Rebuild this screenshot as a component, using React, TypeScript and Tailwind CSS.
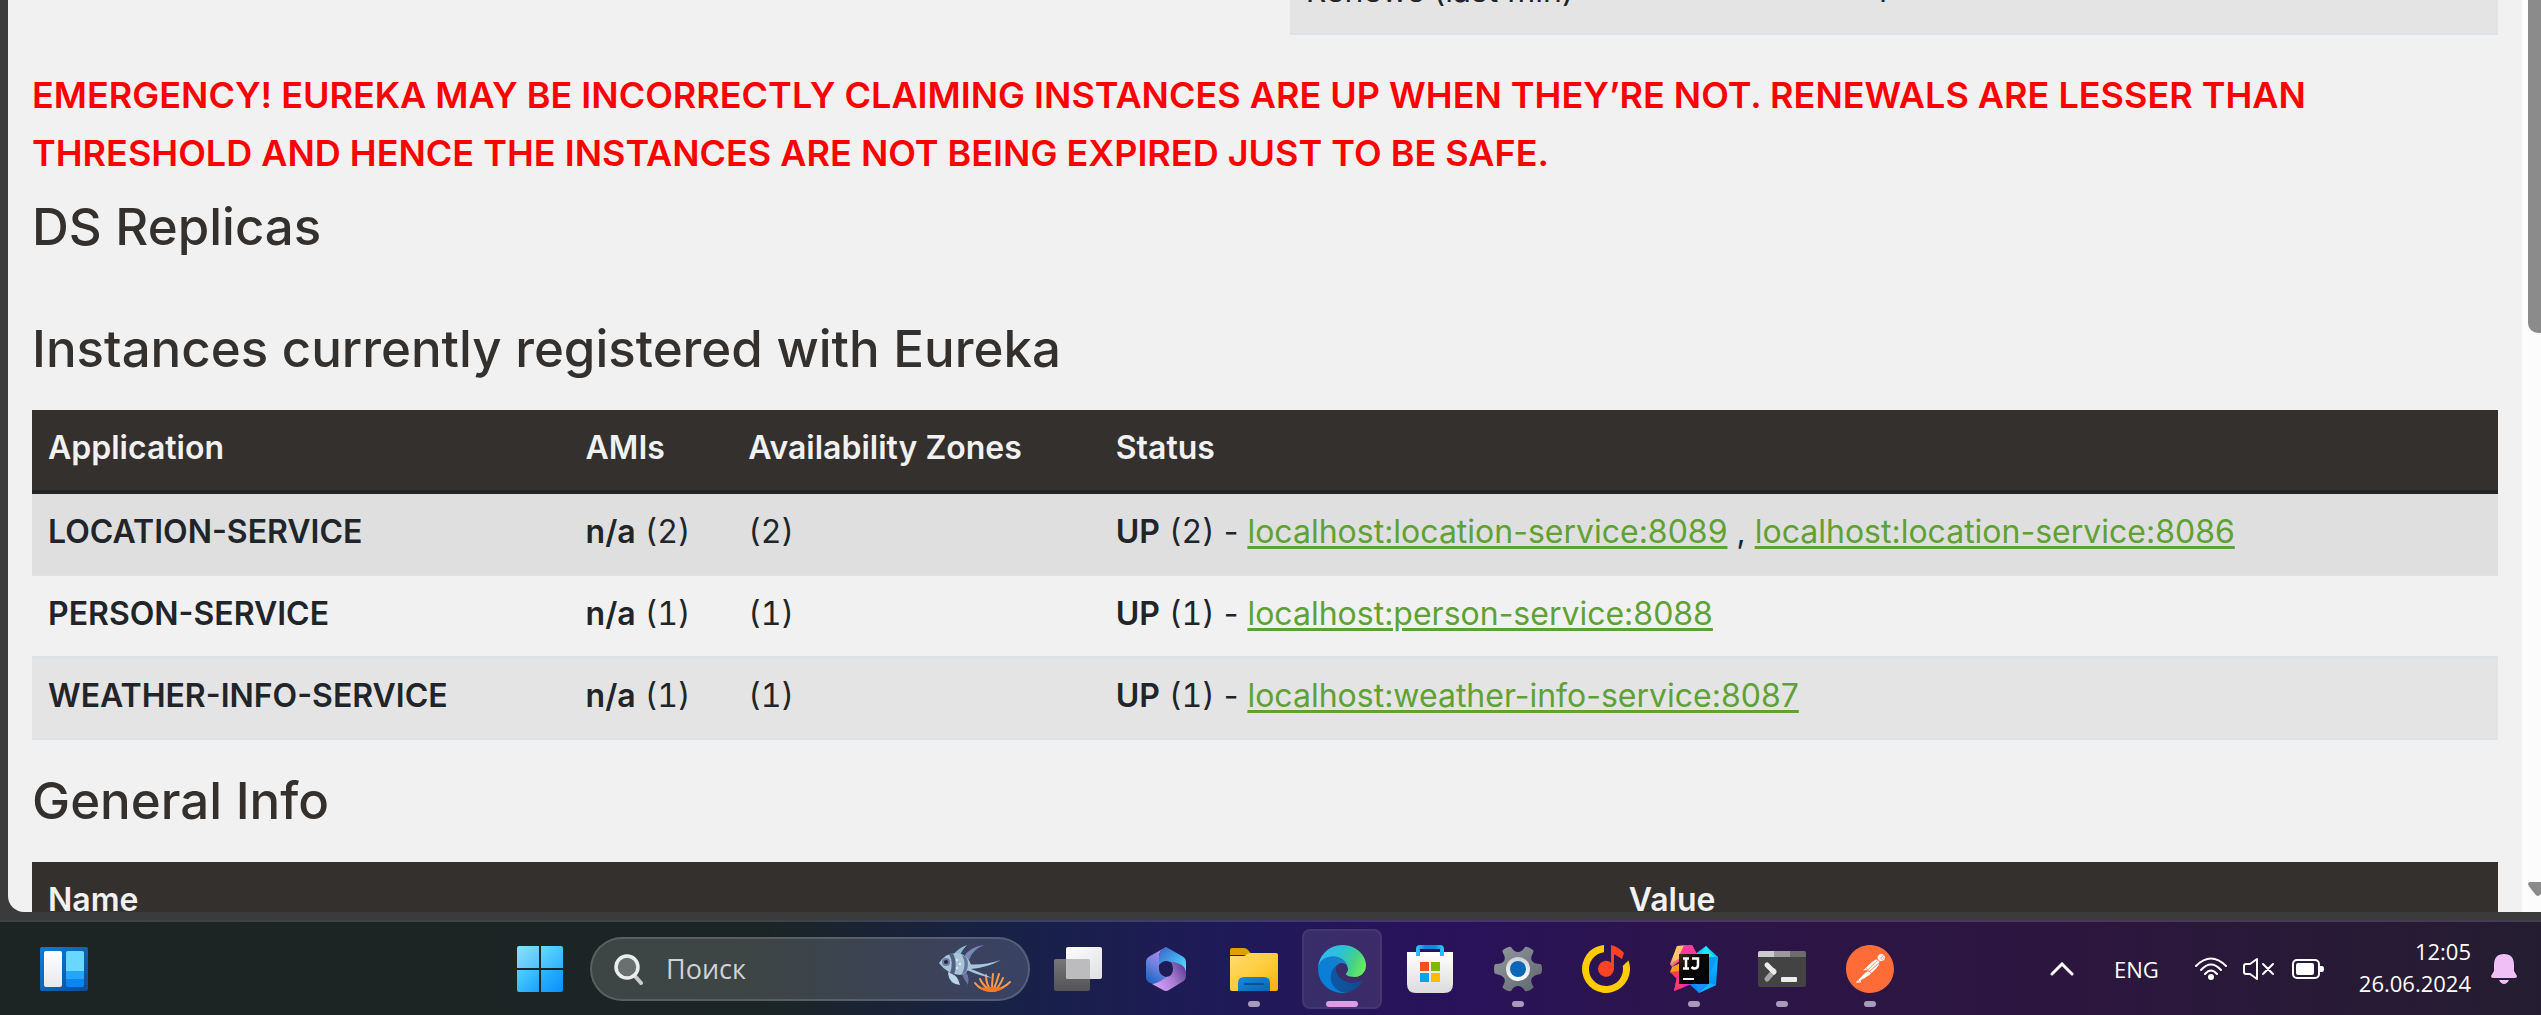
import React from "react";
import type { ReactNode } from "react";
import { SiPostman } from "react-icons/si";

type Instance = {
  name: string;
  count: number;
  links: string[];
  shade: string;
};

const instances: Instance[] = [
  {
    name: "LOCATION-SERVICE",
    count: 2,
    links: ["localhost:location-service:8089", "localhost:location-service:8086"],
    shade: "bg-[#dfdfdf]",
  },
  { name: "PERSON-SERVICE", count: 1, links: ["localhost:person-service:8088"], shade: "bg-[#f1f1f1]" },
  { name: "WEATHER-INFO-SERVICE", count: 1, links: ["localhost:weather-info-service:8087"], shade: "bg-[#e4e4e4]" },
];

const TABLE = "w-full table-fixed border-separate border-spacing-0 text-left text-[32px] leading-[48px]";
const HEAD = "border-b-4 border-[#212529] bg-[#34302d] px-4 pt-3.5 pb-4.5 font-semibold text-[#f1f1f1]";
const CELL = "border-b-2 border-[#dee2e6] px-4 pt-3.5 pb-4.5 whitespace-nowrap";

function Heading({ children }: { children: ReactNode }) {
  return <h1 className="text-[51px] leading-[58px] font-medium text-[#34302d]">{children}</h1>;
}

function Count({ value }: { value: number }) {
  return <span className="tabular-nums">({value})</span>;
}

function StatusTable() {
  return (
    <div className="-mt-[47px] flex justify-end">
      <div className="w-[49%]">
        <table className={TABLE}>
          <tbody>
            <tr className="bg-[#e4e4e4]">
              <td className={CELL + " w-[46.6%]"}>Renews (last min)</td>
              <td className={CELL}>4</td>
            </tr>
          </tbody>
        </table>
      </div>
    </div>
  );
}

function InstancesTable() {
  return (
    <table className={TABLE}>
      <thead>
        <tr>
          <th className={HEAD + " w-[21.8%]"}>Application</th>
          <th className={HEAD + " w-[6.6%]"}>AMIs</th>
          <th className={HEAD + " w-[14.9%]"}>Availability Zones</th>
          <th className={HEAD}>Status</th>
        </tr>
      </thead>
      <tbody>
        {instances.map((item) => (
          <tr key={item.name} className={item.shade}>
            <td className={CELL}>
              <b className="font-semibold">{item.name}</b>
            </td>
            <td className={CELL}>
              <b className="font-semibold">n/a</b> <Count value={item.count} />
            </td>
            <td className={CELL}>
              <Count value={item.count} />
            </td>
            <td className={CELL}>
              <b className="font-semibold">UP</b> <Count value={item.count} /> -{" "}
              {item.links.map((link, i) => (
                <React.Fragment key={link}>
                  {i > 0 && " , "}
                  <a href="#" className="text-[#5fa134] underline decoration-3 underline-offset-3">
                    {link}
                  </a>
                </React.Fragment>
              ))}
            </td>
          </tr>
        ))}
      </tbody>
    </table>
  );
}

function GeneralTable() {
  return (
    <table className={TABLE}>
      <thead>
        <tr>
          <th className={HEAD + " w-[64.1%]"}>Name</th>
          <th className={HEAD}>Value</th>
        </tr>
      </thead>
    </table>
  );
}

function Scrollbar() {
  return (
    <div className="flex w-[19px] shrink-0 flex-col items-end justify-between bg-[#fcfcfc] pb-4">
      <div className="h-[333px] w-[13px] rounded-bl-[10px] bg-[#8b8b8b]" />
      <svg className="h-[14px] w-[13px]" viewBox="0 0 13 14" aria-hidden="true">
        <path d="M2 0H13V12L10.500 14Q8 14 7 12L.8 4Q-1 0 2 0Z" fill="#8b8b8b" />
      </svg>
    </div>
  );
}

function WidgetsIcon() {
  return (
    <svg className="h-12 w-12" viewBox="0 0 48 48" aria-hidden="true">
      <defs>
        <linearGradient id="wg-frame" x1="0" y1="0" x2="1" y2="1">
          <stop offset="0" stopColor="#0a7fdc" />
          <stop offset="1" stopColor="#114a92" />
        </linearGradient>
        <linearGradient id="wg-pane" x1="0" y1="0" x2="0" y2="1">
          <stop offset="0" stopColor="#fff" />
          <stop offset="1" stopColor="#e9e9ec" />
        </linearGradient>
      </defs>
      <rect x="0" y="2" width="48" height="44" rx="2" fill="url(#wg-frame)" />
      <rect x="4" y="6" width="18" height="36" rx="2" fill="url(#wg-pane)" />
      <rect x="26" y="6" width="18" height="36" rx="2" fill="#0a86ee" />
      <path d="M26 26H44V34H26Z" fill="#22a5fb" />
      <path d="M28 6H42Q44 6 44 8V26H26V8Q26 6 28 6Z" fill="#69d8ff" />
    </svg>
  );
}

function StartIcon() {
  return (
    <svg className="h-[46px] w-[46px]" viewBox="0 0 46 46" aria-hidden="true">
      <defs>
        <linearGradient id="st-a" x1="0" y1="0" x2="1" y2="1">
          <stop offset="0" stopColor="#8be1ff" />
          <stop offset="1" stopColor="#50c0fb" />
        </linearGradient>
        <linearGradient id="st-b" x1="0" y1="0" x2="1" y2="1">
          <stop offset="0" stopColor="#64dcff" />
          <stop offset="1" stopColor="#2bb0fb" />
        </linearGradient>
        <linearGradient id="st-c" x1="0" y1="0" x2="1" y2="1">
          <stop offset="0" stopColor="#52d2ff" />
          <stop offset="1" stopColor="#1b9ffb" />
        </linearGradient>
        <linearGradient id="st-d" x1="0" y1="0" x2="1" y2="1">
          <stop offset="0" stopColor="#31b8fc" />
          <stop offset="1" stopColor="#078ffb" />
        </linearGradient>
      </defs>
      <path d="M2 0H22V22H0V2Q0 0 2 0Z" fill="url(#st-a)" />
      <path d="M24 0H44Q46 0 46 2V22H24Z" fill="url(#st-b)" />
      <path d="M0 24H22V46H2Q0 46 0 44Z" fill="url(#st-c)" />
      <path d="M24 24H46V44Q46 46 44 46H24Z" fill="url(#st-d)" />
    </svg>
  );
}

function MagnifierIcon() {
  return (
    <svg className="h-8 w-[30px] shrink-0" viewBox="0 0 30 32" fill="none" aria-hidden="true">
      <path d="M20 22L27 30" stroke="#c9ccd0" strokeWidth="4" strokeLinecap="round" />
      <circle cx="13" cy="14" r="11" fill="#6a706f" stroke="#eceeee" strokeWidth="3.500" />
    </svg>
  );
}

function FishIcon() {
  return (
    <svg className="h-[50px] w-[74px] shrink-0" viewBox="0 0 74 50" fill="none" aria-hidden="true">
      <g stroke="#ff9a4d" strokeWidth="2" strokeLinecap="round">
        <path d="M53 47Q42 46 37 39" />
        <path d="M53 47Q45 42 42 35" />
        <path d="M53 47Q48 40 48 31" />
        <path d="M54 47Q54 38 55 30" />
        <path d="M55 47Q59 38 61 30" />
        <path d="M56 47Q62 42 65 34" />
        <path d="M56 47Q66 44 72 38" />
      </g>
      <path d="M40 44Q54 52 66 44Q54 42 40 44Z" fill="#f27a2c" />
      <path d="M14 12Q20 4 29 1Q24 6 22 11Z" fill="#8fb9d2" />
      <path d="M26 13Q31 3 46 1Q34 6 31 16Z" fill="#7688b6" />
      <path d="M28 20Q44 22 63 16Q48 24 33 25Q46 30 54 34Q42 32 29 26Z" fill="#a5c6dc" />
      <path d="M26 25Q32 31 30 41Q26 36 23 28Z" fill="#6c74a6" />
      <path d="M1 19Q8 8 20 9Q30 11 33 21Q30 29 22 31Q9 30 1 19Z" fill="#a9c3d7" />
      <path d="M11 28Q20 31 22 41Q11 40 10 29Z" fill="#b9d5e7" />
      <path d="M11 10Q16 19 12 29L16 31Q20 20 15 9Z" fill="#506083" />
      <path d="M24 11Q29 20 24 30L28 28Q32 20 28 13Z" fill="#66759d" />
      <circle cx="8" cy="18" r="4" fill="#6c7ba2" />
      <circle cx="8" cy="18" r="2" fill="#1d2742" />
      <g fill="#eef6fb">
        <circle cx="19" cy="16" r="1" />
        <circle cx="22" cy="20" r="1" />
        <circle cx="19" cy="24" r="1" />
      </g>
    </svg>
  );
}

function TaskViewIcon() {
  return (
    <svg className="h-12 w-12" viewBox="0 0 48 48" aria-hidden="true">
      <defs>
        <linearGradient id="tv-a" x1="0" y1="0" x2="1" y2="1">
          <stop offset="0" stopColor="#fff" />
          <stop offset="1" stopColor="#dedfe2" />
        </linearGradient>
        <linearGradient id="tv-b" x1="0" y1="0" x2="0" y2="1">
          <stop offset="0" stopColor="#777779" />
          <stop offset="1" stopColor="#535355" />
        </linearGradient>
      </defs>
      <rect x="0" y="14" width="36" height="32" rx="2" fill="url(#tv-b)" />
      <rect x="12" y="2" width="36" height="32" rx="2" fill="url(#tv-a)" />
      <path d="M12 14H34Q36 14 36 16V34H14Q12 34 12 32Z" fill="#bcbcbe" />
    </svg>
  );
}

function Microsoft365Icon() {
  return (
    <svg className="h-12 w-12" viewBox="0 0 48 48" aria-hidden="true">
      <defs>
        <linearGradient id="ms-a" x1="0.700" y1="0" x2="0.300" y2="1">
          <stop offset="0" stopColor="#b98ae6" />
          <stop offset="0.500" stopColor="#6f82e0" />
          <stop offset="1" stopColor="#1b66c4" />
        </linearGradient>
        <linearGradient id="ms-b" x1="0" y1="0" x2="1" y2="1">
          <stop offset="0" stopColor="#3b62c8" />
          <stop offset="0.500" stopColor="#44a4ea" />
          <stop offset="1" stopColor="#4ff0ff" />
        </linearGradient>
        <linearGradient id="ms-c" x1="0" y1="0.700" x2="1" y2="0.200">
          <stop offset="0" stopColor="#d9a2f8" />
          <stop offset="0.500" stopColor="#ab7fd6" />
          <stop offset="1" stopColor="#5a3f92" />
        </linearGradient>
      </defs>
      <path d="M24 2L8 11Q4 13 4 17V32Q4 36 8 38L11 39Q16 39 24 32Q17 30 17 24V12Q17 5 24 2Z" fill="url(#ms-a)" />
      <path d="M24 2L40 11Q44 13 44 17V28Q42 22 34 18L28 17Q22 14 17 20V11Q18 4 24 2Z" fill="url(#ms-b)" />
      <path d="M44 27V31Q44 35 40 37L27 45Q24 47 21 45L10 39Q17 38 24 32Q31 31 31 24Q31 20 29 17Q43 18 44 27Z" fill="url(#ms-c)" />
    </svg>
  );
}

function FolderIcon() {
  return (
    <svg className="h-12 w-12" viewBox="0 0 48 48" aria-hidden="true">
      <defs>
        <linearGradient id="fd-a" x1="0" y1="0" x2="1" y2="1">
          <stop offset="0" stopColor="#ffdd72" />
          <stop offset="0.600" stopColor="#ffc933" />
          <stop offset="1" stopColor="#f8b100" />
        </linearGradient>
        <linearGradient id="fd-b" x1="0" y1="0" x2="1" y2="1">
          <stop offset="0" stopColor="#1290df" />
          <stop offset="1" stopColor="#0b62b4" />
        </linearGradient>
      </defs>
      <path d="M2 3H14Q17 3 19 6L22 10H0V5Q0 3 2 3Z" fill="#e0a000" />
      <path d="M0 11H13Q15 11 16 10Q18 8 20 8H46Q48 8 48 10V44Q48 46 46 46H2Q0 46 0 44Z" fill="url(#fd-a)" />
      <path d="M8 46V38Q8 32 14 32H34Q40 32 40 38V46Z" fill="url(#fd-b)" />
      <rect x="14" y="38" width="20" height="2" rx="1" fill="#0a4f94" />
    </svg>
  );
}

function EdgeIcon() {
  return (
    <svg className="h-12 w-12" viewBox="0 0 256 256" aria-hidden="true">
      <defs>
        <linearGradient id="eg-a" x1="0" y1="0.500" x2="1" y2="0.500">
          <stop offset="0" stopColor="#0c59a4" />
          <stop offset="1" stopColor="#114a8b" />
        </linearGradient>
        <linearGradient id="eg-b" x1="0.900" y1="0.100" x2="0.200" y2="0.900">
          <stop offset="0" stopColor="#1b86c8" />
          <stop offset="0.300" stopColor="#127fd0" />
          <stop offset="1" stopColor="#0080dc" />
        </linearGradient>
        <linearGradient id="eg-c" x1="0" y1="0.300" x2="1" y2="0.600">
          <stop offset="0" stopColor="#35b6f6" />
          <stop offset="0.450" stopColor="#2bc3d2" />
          <stop offset="0.750" stopColor="#45d285" />
          <stop offset="1" stopColor="#6beb5e" />
        </linearGradient>
      </defs>
      <g transform="translate(-4.630 -4.920)">
        <path
          fill="url(#eg-a)"
          d="M235.68 195.46a93.73 93.73 0 0 1-10.54 4.71 101.87 101.87 0 0 1-35.9 6.46c-47.32 0-88.54-32.55-88.54-74.32A31.48 31.48 0 0 1 117.13 105c-42.8 1.8-53.8 46.4-53.8 72.53 0 73.88 68.09 81.37 82.76 81.37 7.91 0 19.84-2.3 27-4.56l1.31-.44a128.34 128.34 0 0 0 66.6-52.8 4 4 0 0 0-5.32-5.64z"
        />
        <path
          fill="url(#eg-b)"
          d="M110.34 246.34A79.2 79.2 0 0 1 87.6 225a80.72 80.72 0 0 1 29.53-120c3.12-1.47 8.45-4.13 15.54-4a32.35 32.35 0 0 1 25.69 13 31.88 31.88 0 0 1 6.36 18.66c0-.21 24.46-79.6-80-79.6-43.9 0-80 41.66-80 78.21a130.15 130.15 0 0 0 12.11 56 128 128 0 0 0 156.38 67.11 75.55 75.55 0 0 1-62.78-8z"
        />
        <path
          fill="url(#eg-c)"
          d="M156.94 153.78c-.81 1.05-3.3 2.5-3.3 5.66 0 2.61 1.7 5.12 4.72 7.23 14.38 10 41.49 8.68 41.56 8.68a59.56 59.56 0 0 0 30.27-8.35 61.38 61.38 0 0 0 30.43-52.88c.26-22.41-8-37.31-11.34-43.91C228.09 28.76 182.35 4.92 132.61 4.92a128 128 0 0 0-128 126.2c.48-36.54 36.8-66.05 80-66.05 3.5 0 23.46.34 42 10.07 16.34 8.58 24.9 18.94 30.85 29.21 6.18 10.67 7.28 24.15 7.28 29.52s-2.74 13.33-7.8 19.91z"
        />
      </g>
    </svg>
  );
}

function StoreIcon() {
  return (
    <svg className="h-12 w-12" viewBox="0 0 48 48" aria-hidden="true">
      <defs>
        <linearGradient id="so-a" x1="0" y1="0" x2="0" y2="1">
          <stop offset="0" stopColor="#fff" />
          <stop offset="1" stopColor="#dcdcdf" />
        </linearGradient>
        <linearGradient id="so-b" x1="0" y1="0" x2="1" y2="0">
          <stop offset="0" stopColor="#25c4f4" />
          <stop offset="0.300" stopColor="#0f85e8" />
          <stop offset="0.700" stopColor="#0f85e8" />
          <stop offset="1" stopColor="#25c4f4" />
        </linearGradient>
      </defs>
      <path d="M1 7H47V39Q47 48 38 48H10Q1 48 1 39Z" fill="url(#so-a)" />
      <path d="M12 11V4Q12 2 14 2H34Q36 2 36 4V11" fill="none" stroke="url(#so-b)" strokeWidth="4" />
      <rect x="14" y="17" width="9" height="9" fill="#f25022" />
      <rect x="25" y="17" width="9" height="9" fill="#7fba00" />
      <rect x="14" y="28" width="9" height="9" fill="#00a4ef" />
      <rect x="25" y="28" width="9" height="9" fill="#ffb900" />
    </svg>
  );
}

function GearIcon() {
  return (
    <svg className="h-12 w-12" viewBox="0 0 48 48" aria-hidden="true">
      <defs>
        <linearGradient id="ge-a" x1="0" y1="0" x2="1" y2="1">
          <stop offset="0" stopColor="#93999e" />
          <stop offset="1" stopColor="#5d666d" />
        </linearGradient>
        <linearGradient id="ge-b" x1="0" y1="0" x2="0" y2="1">
          <stop offset="0" stopColor="#cfd0d2" />
          <stop offset="1" stopColor="#fff" />
        </linearGradient>
      </defs>
      <path
        d="M17 2Q15 1 9 5Q8 6 9 8Q12 13 10 16Q8 19 2 19Q0 19 0 24Q0 29 2 29Q8 30 10 33Q12 36 9 41Q8 42 9 43Q14 47 17 46Q20 41 24 41Q28 41 31 46Q34 47 39 43Q40 42 39 41Q36 36 38 33Q40 30 46 29Q48 29 48 24Q48 19 46 19Q40 19 38 16Q36 13 39 8Q40 6 39 5Q33 1 31 2Q28 7 24 7Q20 7 17 2Z"
        fill="url(#ge-a)"
      />
      <circle cx="24" cy="24" r="12" fill="url(#ge-b)" />
      <circle cx="24" cy="24" r="8" fill="#0c67b8" />
    </svg>
  );
}

function MusicIcon() {
  return (
    <svg className="h-12 w-12" viewBox="0 0 48 48" aria-hidden="true">
      <path d="M22 0V7.200A17 17 0 1 0 40.700 21L46.500 15.500A24 24 0 1 1 22 0Z" fill="#fc0" />
      <path d="M29 0Q37 2 42 8L40 14L32 9V24A8 8 0 1 1 29 17.500Z" fill="#ff4322" />
    </svg>
  );
}

function IntellijIcon() {
  return (
    <svg className="h-12 w-12" viewBox="0 0 48 48" aria-hidden="true">
      <defs>
        <linearGradient id="ij-a" x1="0" y1="0" x2="1" y2="1">
          <stop offset="0" stopColor="#ff8a3c" />
          <stop offset="0.300" stopColor="#ffd062" />
          <stop offset="0.600" stopColor="#fd3a8a" />
          <stop offset="1" stopColor="#fe2857" />
        </linearGradient>
        <linearGradient id="ij-b" x1="0" y1="0" x2="0" y2="1">
          <stop offset="0" stopColor="#16d6fb" />
          <stop offset="1" stopColor="#087cfa" />
        </linearGradient>
        <linearGradient id="ij-c" x1="0" y1="0" x2="1" y2="1">
          <stop offset="0" stopColor="#4b2b14" />
          <stop offset="0.350" stopColor="#0a0606" />
          <stop offset="1" stopColor="#02060a" />
        </linearGradient>
      </defs>
      <path d="M36 1L48 12L46 40L29 48L16 36L24 10Z" fill="url(#ij-b)" />
      <path d="M46 15L36 1L32 8L39 12Z" fill="#20e4fb" />
      <path d="M48 12L39 12V30Z" fill="#0b9af8" />
      <path d="M39 38L46 40L29 48Z" fill="#10b9f8" />
      <path d="M29 48L24 38H39Z" fill="#1a8df9" />
      <path d="M7 1L22 0L27 10L12 14L2 22L0 19Z" fill="url(#ij-a)" />
      <path d="M7 1L22 0L12 12L2 17Z" fill="#ffc56b" />
      <path d="M14 0H22L27 9H10Z" fill="#ff3c9a" />
      <path d="M2 22L10 18V34L0 27Z" fill="#ff9b1a" />
      <path d="M0 27L10 26V34L6 33Z" fill="#fd3b4e" />
      <path d="M7 32L10 28V38H24L4 46Z" fill="#e22bd0" />
      <path d="M7 32L4 46L14 42Z" fill="#fc3c70" />
      <rect x="9" y="9" width="30" height="30" fill="url(#ij-c)" />
      <g stroke="#fff" strokeWidth="2.500" fill="none">
        <path d="M13 13.500H19M16 13.500V23.500M13 23.500H19" />
        <path d="M22 13.500H28V20Q28 23.500 24.500 23.500Q23 23.500 21.500 22" />
      </g>
      <rect x="13" y="33" width="11" height="2" fill="#fff" />
    </svg>
  );
}

function TerminalIcon() {
  return (
    <svg className="h-12 w-12" viewBox="0 0 48 48" aria-hidden="true">
      <rect x="0" y="6" width="48" height="36" rx="2" fill="#434343" />
      <path d="M2 6H16V12H0V8Q0 6 2 6Z" fill="#ccc" />
      <path d="M16 6H32V12H16Z" fill="#9a9a9a" />
      <path d="M32 6H46Q48 6 48 8V12H32Z" fill="#6c6c6c" />
      <path d="M9 34L16 26" stroke="#a5a5a5" strokeWidth="5" strokeLinecap="round" />
      <path d="M9 20L16 27" stroke="#ececec" strokeWidth="5" strokeLinecap="round" />
      <rect x="23" y="32" width="16" height="5" rx="1" fill="#ececec" />
    </svg>
  );
}

function PostmanIcon() {
  return (
    <span className="flex h-12 w-12 rounded-full bg-[radial-gradient(circle,#fff_60%,transparent_61%)]">
      <SiPostman className="h-12 w-12 text-[#ff6c37]" aria-hidden="true" />
    </span>
  );
}

type App = { label: string; icon: ReactNode; state?: "running" | "active" };

const apps: App[] = [
  { label: "Task view", icon: <TaskViewIcon /> },
  { label: "Microsoft 365", icon: <Microsoft365Icon /> },
  { label: "File Explorer", icon: <FolderIcon />, state: "running" },
  { label: "Microsoft Edge", icon: <EdgeIcon />, state: "active" },
  { label: "Microsoft Store", icon: <StoreIcon /> },
  { label: "Settings", icon: <GearIcon />, state: "running" },
  { label: "Music", icon: <MusicIcon /> },
  { label: "IntelliJ IDEA", icon: <IntellijIcon />, state: "running" },
  { label: "Terminal", icon: <TerminalIcon />, state: "running" },
  { label: "Postman", icon: <PostmanIcon />, state: "running" },
];

function AppButton({ label, icon, state }: App) {
  return (
    <button
      type="button"
      aria-label={label}
      className={
        state === "active"
          ? "relative flex h-20 w-20 items-center justify-center rounded-lg border-2 border-white/5 bg-white/10"
          : "relative flex h-20 w-20 items-center justify-center"
      }
    >
      {icon}
      {state === "running" && <span className="absolute bottom-0.5 h-1.5 w-3 rounded-full bg-[#a79bbb]" />}
      {state === "active" && <span className="absolute bottom-0 h-1.5 w-8 rounded-full bg-[#dd9de6]" />}
    </button>
  );
}

function Tray() {
  return (
    <div className="flex items-center text-[22px] leading-8 text-white">
      <button type="button" aria-label="Show hidden icons" className="mr-10">
        <svg className="h-3.5 w-6" viewBox="0 0 24 14" fill="none" stroke="#fff" strokeWidth="3" strokeLinecap="round" aria-hidden="true">
          <path d="M2 12L12 2L22 12" />
        </svg>
      </button>
      <button type="button" className="mr-9">
        ENG
      </button>
      <button type="button" aria-label="Network, volume and battery" className="mr-[34px] flex items-center gap-4">
        <svg className="h-6 w-8" viewBox="0 0 32 24" fill="none" stroke="#fff" strokeWidth="2" strokeLinecap="round" aria-hidden="true">
          <path d="M1 9Q16 -6 31 9M6 13Q16 2 26 13M10 17Q16 10 22 17" />
          <circle cx="16" cy="20" r="3" fill="#fff" stroke="none" />
        </svg>
        <svg className="h-6 w-8" viewBox="0 0 32 24" fill="none" stroke="#fff" strokeWidth="2" strokeLinejoin="round" strokeLinecap="round" aria-hidden="true">
          <path d="M14 2V22L7 17H3Q1 17 1 15V9Q1 7 3 7H7ZM20 7L30 17M30 7L20 17" />
        </svg>
        <svg className="h-6 w-[34px]" viewBox="0 0 34 24" aria-hidden="true">
          <rect x="2" y="3" width="26" height="18" rx="4" fill="none" stroke="#fff" strokeWidth="2" />
          <rect x="5" y="6" width="18" height="12" rx="2" fill="#fff" />
          <path d="M29 9H31Q33 9 33 12Q33 15 31 15H29Z" fill="#fff" />
        </svg>
      </button>
      <button type="button" className="mr-5 pb-1 text-right">
        <span className="block">12:05</span>
        <span className="block">26.06.2024</span>
      </button>
      <button type="button" aria-label="Notifications">
        <svg className="h-8 w-[26px]" viewBox="0 0 26 32" fill="#f0bff5" aria-hidden="true">
          <path d="M13 1Q23 1 23 12V18L26 23Q26 25 24 25H2Q0 25 0 23L3 18V12Q3 1 13 1ZM8 27H18Q16 31 13 31Q10 31 8 27Z" />
        </svg>
      </button>
    </div>
  );
}

function Taskbar() {
  return (
    <nav
      aria-label="Taskbar"
      className="flex h-[95px] shrink-0 items-center border-t-2 border-white/15 bg-[linear-gradient(90deg,#1d2424_0%,#1c2525_30%,#182148_40%,#1f1a58_48%,#29125a_57%,#2c1548_68%,#2c163e_82%,#241d30_100%)] bg-origin-border pr-6 pl-10 font-['Open_Sans',sans-serif]"
    >
      <div className="min-w-0 flex-[460]">
        <button type="button" aria-label="Widgets" className="block">
          <WidgetsIcon />
        </button>
      </div>
      <div className="flex shrink-0 items-center">
        <button type="button" aria-label="Start" className="flex h-20 w-20 items-center justify-center">
          <StartIcon />
        </button>
        <label className="mr-2 ml-2.5 flex h-16 w-[440px] items-center gap-[22px] rounded-full border-2 border-white/15 bg-white/15 pr-4 pl-[22px]">
          <MagnifierIcon />
          <input
            type="text"
            placeholder="Поиск"
            aria-label="Поиск"
            className="min-w-0 flex-1 bg-transparent text-[27px] leading-9 text-white outline-none placeholder:text-[#d0d2d4]"
          />
          <FishIcon />
        </label>
        <div className="flex gap-2">
          {apps.map((app) => (
            <AppButton key={app.label} {...app} />
          ))}
        </div>
      </div>
      <div className="flex min-w-0 flex-[607] justify-end">
        <Tray />
      </div>
    </nav>
  );
}

export default function App() {
  return (
    <div className="flex h-screen flex-col overflow-hidden bg-[#3b3b3b] font-['Inter',sans-serif] text-[#212529]">
      <div className="mb-2 ml-2 flex min-h-0 flex-1 overflow-hidden rounded-bl-2xl bg-[#f1f1f1]">
        <main className="min-w-0 flex-1 overflow-hidden pr-6 pl-6">
          <StatusTable />
          <p className="mt-[31px] mb-4 text-[36px] leading-[58px] font-semibold text-[#ff0000]">
            EMERGENCY! EUREKA MAY BE INCORRECTLY CLAIMING INSTANCES ARE UP WHEN THEY’RE NOT. RENEWALS ARE LESSER THAN
            THRESHOLD AND HENCE THE INSTANCES ARE NOT BEING EXPIRED JUST TO BE SAFE.
          </p>
          <div className="flex flex-col gap-16">
            <Heading>DS Replicas</Heading>
            <Heading>Instances currently registered with Eureka</Heading>
          </div>
          <div className="mt-8 flex flex-col gap-8">
            <InstancesTable />
            <Heading>General Info</Heading>
            <GeneralTable />
          </div>
        </main>
        <Scrollbar />
      </div>
      <Taskbar />
    </div>
  );
}
